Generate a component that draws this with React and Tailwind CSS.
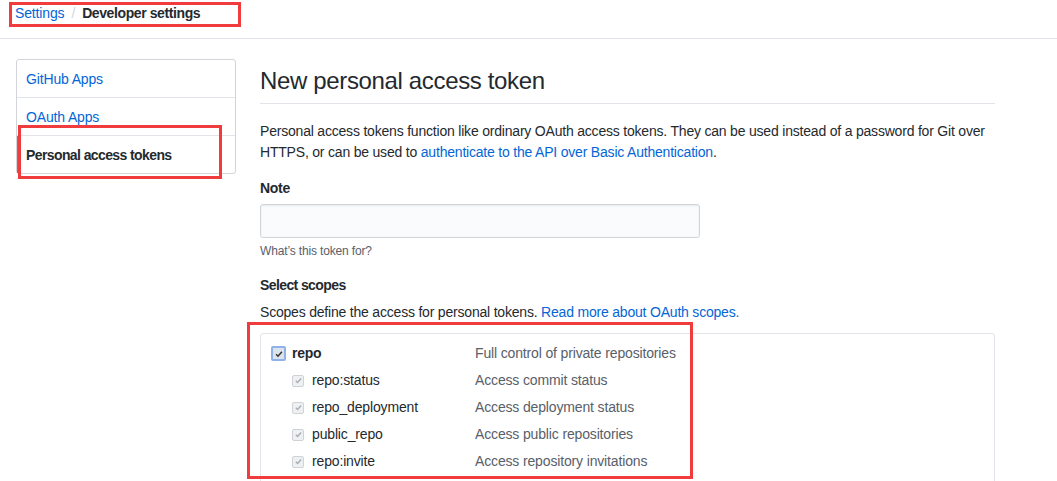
import React from 'react';

const scopes = [
  { name: 'repo:status', desc: 'Access commit status' },
  { name: 'repo_deployment', desc: 'Access deployment status' },
  { name: 'public_repo', desc: 'Access public repositories' },
  { name: 'repo:invite', desc: 'Access repository invitations' },
];

const Check = ({ className }) => (
  <svg viewBox="0 0 12 12" className={className}>
    <path d="M2.5 6.3l2.3 2.3 4.7-5.2" fill="none" stroke="currentColor" strokeWidth="1.8" />
  </svg>
);

const App = () => {
  return (
    <div className="relative w-[1057px] h-[481px] overflow-hidden bg-white text-[#24292e] font-['Liberation_Sans',Arial,sans-serif] text-[14px] tracking-[-0.15px]">
      {/* breadcrumb */}
      <div className="h-[39px] border-b border-[#e1e4e8] pl-[15px] pt-[3px] text-[14px] leading-[20px]">
        <a className="text-[#0366d6]">Settings</a>
        <span className="text-[#d1d5da] mx-[7px]">/</span>
        <span className="font-semibold tracking-[-0.4px]">Developer settings</span>
      </div>

      <div className="flex pl-[16px] pt-[20px]">
        {/* sidebar */}
        <div className="w-[220px] shrink-0 self-start border border-[#d1d5da] rounded-[3px]">
          <div className="h-[38px] flex items-center pl-[9px] pt-[2px] border-b border-[#e1e4e8] text-[#0366d6]">GitHub Apps</div>
          <div className="h-[38px] flex items-center pl-[9px] pt-[2px] border-b border-[#e1e4e8] text-[#0366d6]">OAuth Apps</div>
          <div className="h-[37px] flex items-center pl-[7px] pt-[2px] border-l-[2px] border-[#e36209] font-semibold tracking-[-0.6px]">Personal access tokens</div>
        </div>

        {/* main */}
        <div className="ml-[24px] w-[735px]">
          <div className="pt-[7px] pb-[7px] border-b border-[#e1e4e8]">
            <h1 className="text-[24px] leading-[30px] font-normal tracking-[-0.35px]">New personal access token</h1>
          </div>
          <p className="mt-[17px] leading-[21px] tracking-[-0.2px]">
            Personal access tokens function like ordinary OAuth access tokens. They can be used instead of a password for Git over HTTPS, or can be used to{' '}
            <a className="text-[#0366d6]">authenticate to the API over Basic Authentication</a>.
          </p>

          <div className="mt-[15px] font-semibold leading-[21px] tracking-[-0.3px]">Note</div>
          <div className="mt-[5px] w-[440px] h-[34px] bg-[#fafbfc] border border-[#d1d5da] rounded-[3px] shadow-[inset_0_1px_2px_rgba(27,31,35,0.075)]"></div>
          <div className="mt-[4px] text-[12px] leading-[18px] text-[#586069]">What’s this token for?</div>

          <div className="mt-[15px] font-semibold leading-[21px] tracking-[-0.6px]">Select scopes</div>
          <p className="mt-[6px] leading-[21px] tracking-[-0.2px]">
            Scopes define the access for personal tokens. <a className="text-[#0366d6]">Read more about OAuth scopes.</a>
          </p>

          <div className="mt-[10px] border border-[#e1e4e8] rounded-[3px] pt-[6px] pl-[10px] h-[160px]">
            <div className="flex items-center h-[27px]">
              <div className="w-[204px] flex items-center">
                <span className="w-[15px] h-[15px] rounded-[2px] border-[2px] border-[#8fb3e8] bg-[#dde3ea] flex items-center justify-center text-[#333]">
                  <Check className="w-[10px] h-[10px]" />
                </span>
                <span className="ml-[6px] font-semibold tracking-[-0.3px]">repo</span>
              </div>
              <span className="text-[#586069]">Full control of private repositories</span>
            </div>
            {scopes.map((s) => (
              <div key={s.name} className="flex items-center h-[27px]">
                <div className="w-[204px] flex items-center pl-[21px]">
                  <span className="w-[12px] h-[12px] rounded-[2px] border border-[#cfd3d7] bg-[#eef0f2] flex items-center justify-center text-[#a8adb2]">
                    <Check className="w-[9px] h-[9px]" />
                  </span>
                  <span className="ml-[8px]">{s.name}</span>
                </div>
                <span className="text-[#586069]">{s.desc}</span>
              </div>
            ))}
          </div>
        </div>
      </div>

      {/* annotation boxes */}
      <div className="absolute left-[9px] top-[2px] w-[232px] h-[25px] border-[3px] border-[#f03c3c]"></div>
      <div className="absolute left-[18px] top-[125px] w-[204px] h-[54px] border-[3px] border-[#f03c3c]"></div>
      <div className="absolute left-[247px] top-[322px] w-[446px] h-[157px] border-[3px] border-[#f03c3c]"></div>
    </div>
  );
};

export default App;
